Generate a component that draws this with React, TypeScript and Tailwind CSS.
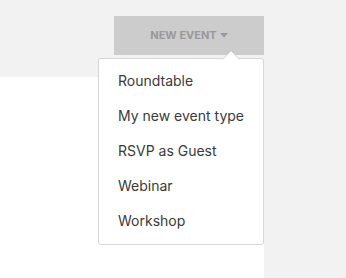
export default function App() {
  const items = ["Roundtable", "My new event type", "RSVP as Guest", "Webinar", "Workshop"];
  return (
    <div className="relative w-[346px] h-[278px] bg-[#f2f2f2] overflow-hidden" style={{ fontFamily: "Inter, 'Liberation Sans', sans-serif" }}>
      <div className="h-[77px] pt-[16px] pl-[114px]">
        <button className="w-[150px] h-[39px] bg-[#cccccc] flex items-center justify-center gap-[3px] text-[11px] font-bold text-[#999999]">
          <span>NEW EVENT</span>
          <svg width="8" height="5" viewBox="0 0 8 5"><polygon points="0,0 8,0 4,4.5" fill="#999999" /></svg>
        </button>
      </div>
      <div className="flex h-[201px]">
        <div className="w-[264px] bg-white" />
        <div className="flex-1" />
      </div>
      <div className="absolute left-[98px] top-[58px] w-[166px] h-[187px] bg-white border border-[#d6d6d6] rounded-[3px] pt-[4px] pb-[6px]">
        <svg className="absolute left-[123px] top-[-9px]" width="18" height="10" viewBox="0 0 18 10">
          <polyline points="0.5,9.5 9,1 17.5,9.5" fill="white" stroke="#d6d6d6" strokeWidth="1" />
          <rect x="1" y="9" width="16" height="2" fill="white" />
        </svg>
        {items.map((t) => (
          <div key={t} className="h-[35px] flex items-center pl-[19px] text-[14px] text-[#3a3a3a]">{t}</div>
        ))}
      </div>
    </div>
  );
}
